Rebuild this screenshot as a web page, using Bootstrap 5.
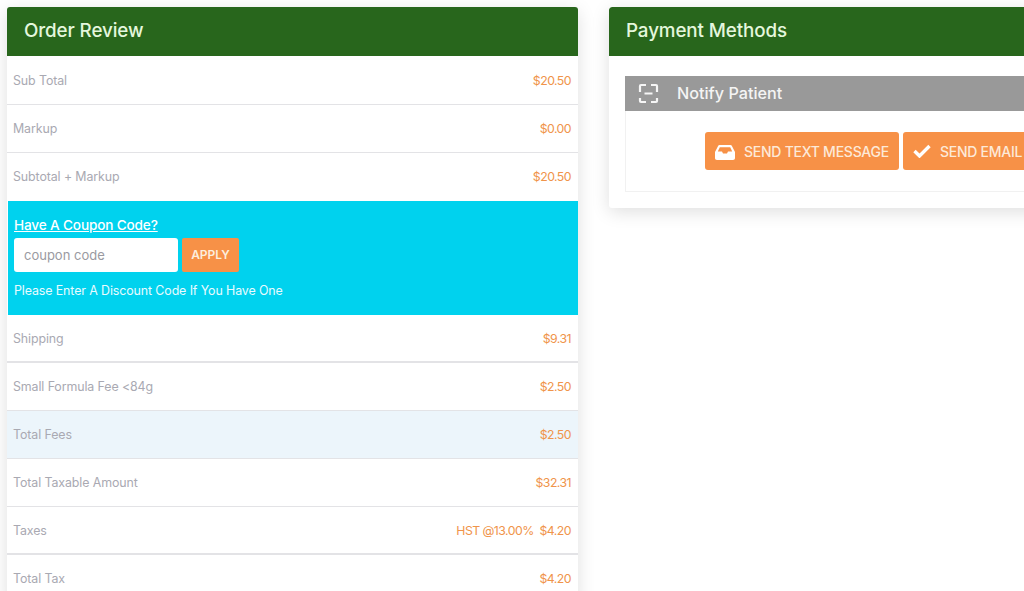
<!DOCTYPE html>
<html lang="en"><head><meta charset="utf-8"><title>Order Review</title>
<link href="https://cdn.jsdelivr.net/npm/bootstrap@5.3.0/dist/css/bootstrap.min.css" rel="stylesheet">
<style>
html,body{height:591px;overflow:hidden;background:#fff}
body{font-family:Inter,"Open Sans",sans-serif;color:#a9a9b2}
.page-wrap{width:1240px;padding:7px 7px 0}
.pane{width:571px;flex:none;background:#fff;box-shadow:0 4px 18px rgba(0,0,0,.13);border-radius:3px 3px 0 0}
.pane-second{margin-left:31px;width:640px;height:201px;overflow:hidden;border-radius:3px}
.pane-head{background:#28661c;color:#e4f7dd;height:49px;font-size:18.800px;font-weight:500;padding:0 17px;border-radius:3px 3px 0 0;line-height:48px;letter-spacing:-.1px}
.line-row{height:48px;padding:2px 7px 0 6px;font-size:12.4px;letter-spacing:-.1px;border-bottom:1px solid #e3e3e6}
.line-row.first{height:49px}
.line-row.last-before{padding-top:0}
.line-row .amt{color:#f0944a;font-size:12.300px;letter-spacing:-.55px}
.line-row.tinted{background:#ecf5fb}
.line-row.thick{border-bottom-width:2px}
.coupon{background:#00d2ee;height:114px;padding:15px 6px 0 6px;color:#fff;margin-left:1px}
.coupon a{color:#fff;font-size:13.6px;font-weight:500;display:block;line-height:18px;letter-spacing:-.15px}
.coupon-input{width:164px;height:34px;background:#fff;border:0;border-radius:3px;padding:0 10px;font-size:13px;color:#8f8f97;line-height:34px}
.coupon-input::placeholder{color:#9a9aa1;opacity:1}
.apply{background:#f79147;color:#fdeedd;border:0;border-radius:2px;height:34px;width:57px;font-size:12px;font-weight:600;padding:0;margin-left:4px}
.coupon p{margin:10px 0 0;line-height:17px;color:#e9fbff;font-size:12.4px;letter-spacing:-.1px}
.notify{margin:20px 0 0 16px;height:35px;background:#999;color:#f4f4f4;font-size:16.2px;font-weight:500;padding-left:13px}
.notify svg{margin-right:18px}
.send-box{margin-left:16px;height:81px;border:1px solid #f1f1f1;border-top:0;padding-top:21px;padding-left:79px}
.send{background:#f79147;color:#fde9d8;border:0;border-radius:3px;height:38px;font-size:14px;font-weight:500;letter-spacing:-.25px;padding:0 10px 0 10px;margin-right:4px;white-space:nowrap}
.send svg{margin-right:9px;vertical-align:-3px}
.send .tick{vertical-align:-1px}
</style></head>
<body>
<div class="page-wrap d-flex align-items-start">
  <section class="pane">
    <div class="pane-head">Order Review</div>
    <div class="line-row first d-flex justify-content-between align-items-center"><span>Sub Total</span><span class="amt">$20.50</span></div>
    <div class="line-row d-flex justify-content-between align-items-center"><span>Markup</span><span class="amt">$0.00</span></div>
    <div class="line-row last-before d-flex justify-content-between align-items-center border-0"><span>Subtotal + Markup</span><span class="amt">$20.50</span></div>
    <div class="coupon">
      <a href="#">Have A Coupon Code?</a>
      <div class="d-flex mt-1"><input class="coupon-input" placeholder="coupon code"><button class="apply">APPLY</button></div>
      <p>Please Enter A Discount Code If You Have One</p>
    </div>
    <div class="line-row thick d-flex justify-content-between align-items-center"><span>Shipping</span><span class="amt">$9.31</span></div>
    <div class="line-row d-flex justify-content-between align-items-center"><span>Small Formula Fee &lt;84g</span><span class="amt">$2.50</span></div>
    <div class="line-row tinted d-flex justify-content-between align-items-center"><span>Total Fees</span><span class="amt">$2.50</span></div>
    <div class="line-row d-flex justify-content-between align-items-center"><span>Total Taxable Amount</span><span class="amt">$32.31</span></div>
    <div class="line-row thick d-flex justify-content-between align-items-center"><span>Taxes</span><span class="amt">HST @13.00% &nbsp;$4.20</span></div>
    <div class="line-row d-flex justify-content-between align-items-center"><span>Total Tax</span><span class="amt">$4.20</span></div>
  </section>
  <section class="pane pane-second">
    <div class="pane-head">Payment Methods</div>
    <div class="notify d-flex align-items-center">
      <svg width="21" height="21" viewBox="0 0 21 21" fill="none" stroke="#f6f6f6" stroke-width="2.2" stroke-linejoin="round"><path d="M8 2H3a1 1 0 0 0-1 1v6M13 2h5a1 1 0 0 1 1 1v6M8 19H3a1 1 0 0 1-1-1v-3M13 19h5a1 1 0 0 0 1-1v-3M6.500 10.500h8"/></svg>
      <span>Notify Patient</span>
    </div>
    <div class="send-box d-flex align-items-start">
      <button class="send"><svg width="20" height="16" viewBox="0 0 20 16" fill="#fff"><path d="M4.500 1h11c.6 0 1 .3 1.300.8L20 8v6c0 1-.7 2-2 2H2c-1.300 0-2-1-2-2V8l3.200-6.200C3.500 1.300 3.900 1 4.500 1zM4.800 3.200L2.800 7.500H7l1 2h4l1-2h4.200l-2-4.300z"/></svg>SEND TEXT MESSAGE</button>
      <button class="send"><svg class="tick" width="18" height="14" viewBox="0 0 18 14" fill="none" stroke="#fff" stroke-width="3.400"><path d="M1.500 7l5 5L16.500 2"/></svg>SEND EMAIL</button>
    </div>
  </section>
</div>
</body></html>
